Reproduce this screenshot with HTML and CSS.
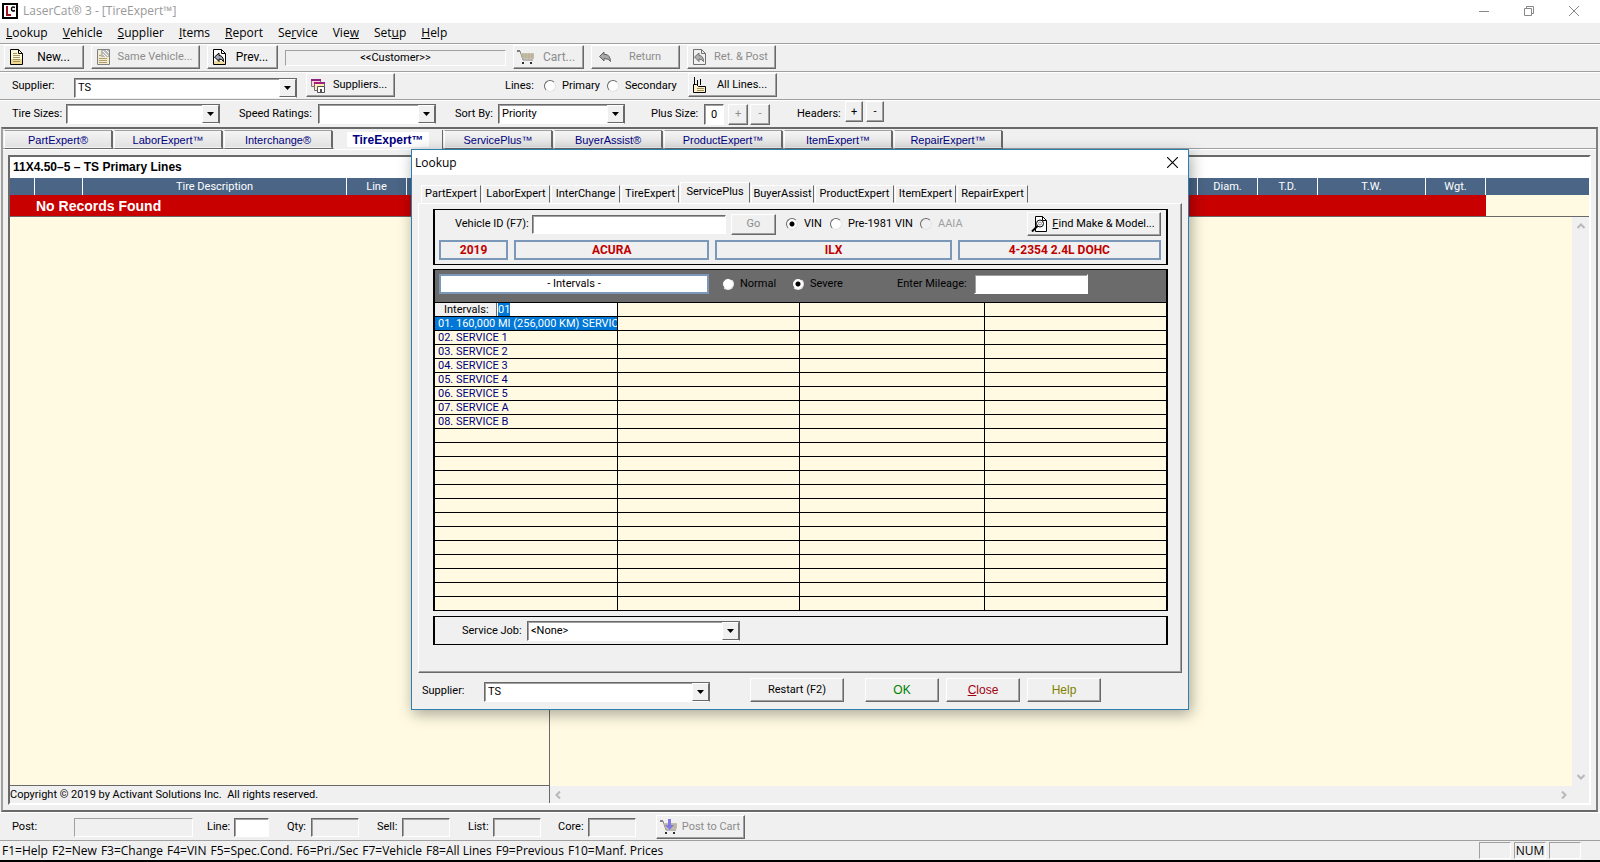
FILE: index.html
```html
<!DOCTYPE html>
<html lang="en">
<head>
<meta charset="utf-8">
<title>LaserCat 3</title>
<link rel="stylesheet" href="styles.css">
</head>
<body>
<svg class="defs" width="0" height="0" aria-hidden="true">
  <symbol id="arrow" viewBox="0 0 7 4"><path d="M0 0h7L3.500 4z" fill="#000"/></symbol>
  <symbol id="cart" viewBox="0 0 18 16">
    <path d="M1 2h2l3 9h10" fill="none" stroke="#808080"/><path d="M0 1h3v2H0z" fill="#808080"/>
    <path d="M4 4h13v6H6z" fill="#d0c8b4"/><path d="M6 4v7M9 4v7M12 4v7M15 4v7M4 6h13M5 8h12" stroke="#b8ae98"/>
    <path d="M5 13h2v2H5zM13 13h2v2h-2z" fill="#303030"/>
  </symbol>
  <symbol id="back" viewBox="0 0 12 10"><path d="M5 0v2.500h2q4 .5 4.500 7Q10 6.500 5 6.500V9L.5 4.500z" fill="#a8a8a8" stroke="#606060"/></symbol>
</svg>

<header class="titlebar">
  <svg class="logo" viewBox="0 0 16 16"><path d="M1 1h14v14H1z" fill="#fff" stroke="#000" stroke-width="2"/><path d="M5 3v9M4 12h5" fill="none" stroke="#a01020" stroke-width="2"/><path d="M13 4.500q-3.500-1.500-3.500 1.500t3.500 1.500" fill="none" stroke="#000" stroke-width="1.500"/></svg>
  <h1>LaserCat® 3 - [TireExpert™]</h1>
  <div class="wincontrols">
    <button aria-label="Minimize"><svg viewBox="0 0 10 10"><path d="M0 5.500h10" stroke="#888"/></svg></button>
    <button aria-label="Restore"><svg viewBox="0 0 10 10"><path d="M.5 2.500h7v7h-7zM2.500 2.500v-2h7v7h-2" fill="none" stroke="#888"/></svg></button>
    <button aria-label="Close"><svg viewBox="0 0 10 10"><path d="M0 0l10 10M10 0L0 10" stroke="#888"/></svg></button>
  </div>
</header>

<nav class="menubar">
  <button><u>L</u>ookup</button><button><u>V</u>ehicle</button><button><u>S</u>upplier</button><button><u>I</u>tems</button><button><u>R</u>eport</button><button>Se<u>r</u>vice</button><button>Vie<u>w</u></button><button>Set<u>u</u>p</button><button><u>H</u>elp</button>
</nav>

<div class="toolbar main-tools">
  <button class="btn b-new"><svg class="ico" viewBox="0 0 16 16"><path d="M2.500.5h8l4 4v11h-12z" fill="#fff8d8" stroke="#000"/><path d="M3 10h11v5H3z" fill="#f0d890"/><path d="M10.500.5v4h4" fill="none" stroke="#000"/><path d="M5 4.500h4M5 6.500h7M5 8.500h7M5 10.500h7M5 12.500h7" stroke="#a89868"/></svg><span>New...</span></button>
  <button class="btn b-same" disabled><svg class="ico" viewBox="0 0 16 16"><path d="M2.500.5h12v15h-12z" fill="#f4ecd0" stroke="#808080"/><path d="M6 1h8v7H6z" fill="#b8b8b8"/><path d="M8 2l5 5M8 5l3 3M11 1l3 3" stroke="#fff"/><path d="M4 6.500h2M4 9.500h8M4 11.500h8M4 13.500h8" stroke="#b0a070"/></svg><span>Same Vehicle...</span></button>
  <button class="btn b-prev"><svg class="ico" viewBox="0 0 16 16"><path d="M2.500.5h8l4 4v11h-12z" fill="#fff" stroke="#000"/><path d="M10.500.5v4h4" fill="none" stroke="#000"/><path d="M3 12h11v3H3z" fill="#f0dca0"/><path d="M8 4v2.500q4.500 0 4.500 6Q11 10 8 10v2.500L3.500 8z" fill="#a0a8b8" stroke="#000"/></svg><span>Prev...</span></button>
  <output class="customer">&lt;&lt;Customer&gt;&gt;</output>
  <button class="btn b-cart" disabled><svg class="ico wide"><use href="#cart"/></svg><span>Cart...</span></button>
  <button class="btn b-ret" disabled><svg class="ico small"><use href="#back"/></svg><span>Return</span></button>
  <button class="btn b-ret" disabled><svg class="ico" viewBox="0 0 16 16"><path d="M2.500.5h8l4 4v11h-12z" fill="#f0f0f0" stroke="#707070"/><path d="M10.500.5v4h4" fill="none" stroke="#707070"/><path d="M8 4v2.500q4.500 0 4.500 6Q11 10 8 10v2.500L3.500 8z" fill="#b0b0b0" stroke="#707070"/></svg><span>Ret. &amp; Post</span></button>
</div>

<div class="toolbar supplier-tools">
  <label for="supplier">Supplier:</label>
  <span class="combo"><select id="supplier"><option>TS</option></select><span class="drop"><svg><use href="#arrow"/></svg></span></span>
  <button class="btn b-suppliers"><svg class="ico" viewBox="0 0 16 16"><path d="M1.500 2.500h9v7h-9z" fill="#ffd0d8" stroke="#807080"/><path d="M1 2h10v2H1z" fill="#902080"/><path d="M4.500 5.500h10v8h-10z" fill="#fff0b0" stroke="#706880"/><path d="M4 5h11v2H4z" fill="#a02080"/><path d="M7.500 9.500h7v6h-7z" fill="#fff" stroke="#505050"/><path d="M10 12h2v3h-2z" fill="#505050"/></svg><span>Suppliers...</span></button>
  <span class="lines-label">Lines:</span>
  <label class="radio"><input type="radio" name="lines"><span>Primary</span></label>
  <label class="radio"><input type="radio" name="lines"><span>Secondary</span></label>
  <button class="btn b-ret"><svg class="ico" viewBox="0 0 16 16"><path d="M2.500 0v8M5.500 3v5M8.500 2v6" stroke="#000"/><path d="M1.500 7.500h3l2 2h7v6h-12z" fill="#fff0c8" stroke="#000"/><path d="M5 11.500h7M5 13.500h7" stroke="#a09060"/></svg><span>All Lines...</span></button>
</div>

<div class="toolbar tire-tools">
  <label for="sizes">Tire Sizes:</label>
  <span class="combo"><select id="sizes"><option></option></select><span class="drop"><svg><use href="#arrow"/></svg></span></span>
  <label for="speed">Speed Ratings:</label>
  <span class="combo"><select id="speed"><option></option></select><span class="drop"><svg><use href="#arrow"/></svg></span></span>
  <label for="sort">Sort By:</label>
  <span class="combo"><select id="sort"><option>Priority</option></select><span class="drop"><svg><use href="#arrow"/></svg></span></span>
  <label for="plus">Plus Size:</label>
  <input class="field plus" id="plus" type="text" value="0">
  <button class="btn step" disabled>+</button>
  <button class="btn step" disabled>-</button>
  <span>Headers:</span>
  <button class="btn step raised">+</button>
  <button class="btn step raised">-</button>
</div>

<main class="workspace">
  <div class="tabs" role="tablist">
    <button role="tab">PartExpert®</button><button role="tab">LaborExpert™</button><button role="tab">Interchange®</button><button role="tab" aria-selected="true" class="on"><span>TireExpert™</span></button><button role="tab">ServicePlus™</button><button role="tab">BuyerAssist®</button><button role="tab" class="wider">ProductExpert™</button><button role="tab">ItemExpert™</button><button role="tab">RepairExpert™</button>
  </div>
  <div class="sheet">
    <section class="results">
      <h2>11X4.50–5 – TS Primary Lines</h2>
      <table class="tires">
        <colgroup><col class="c1"><col class="c2"><col class="c3"><col class="c4"><col class="c5"><col class="c4"><col class="c4"><col class="c6"><col class="c4"><col></colgroup>
        <thead><tr><th></th><th></th><th>Tire Description</th><th>Line</th><th></th><th>Diam.</th><th>T.D.</th><th>T.W.</th><th>Wgt.</th><th></th></tr></thead>
        <tbody><tr><td colspan="9" class="none">No Records Found</td><td></td></tr></tbody>
      </table>
      <div class="panes">
        <div class="left"><div class="blank"></div><p>Copyright © 2019 by Activant Solutions Inc.&nbsp; All rights reserved.</p></div>
        <div class="right">
          <div class="blank"></div>
          <div class="vscroll"><svg viewBox="0 0 8 6"><path d="M.5 5L4 1.500 7.500 5" fill="none" stroke="#b8b8b8" stroke-width="2"/></svg><svg viewBox="0 0 8 6"><path d="M.5 1L4 4.500 7.500 1" fill="none" stroke="#b8b8b8" stroke-width="2"/></svg></div>
          <div class="hscroll"><svg viewBox="0 0 6 8"><path d="M5 .5L1.500 4 5 7.500" fill="none" stroke="#b8b8b8" stroke-width="2"/></svg><svg viewBox="0 0 6 8"><path d="M1 .5L4.500 4 1 7.500" fill="none" stroke="#b8b8b8" stroke-width="2"/></svg></div>
        </div>
      </div>
    </section>
  </div>
</main>

<div class="toolbar post-tools">
  <label for="post">Post:</label><input class="field thin" id="post" disabled>
  <label for="line">Line:</label><input class="field" id="line">
  <label for="qty">Qty:</label><input class="field" id="qty" disabled>
  <label for="sell">Sell:</label><input class="field" id="sell" disabled>
  <label for="list">List:</label><input class="field" id="list" disabled>
  <label for="core">Core:</label><input class="field" id="core" disabled>
  <button class="btn b-ret" disabled><svg class="ico wide" viewBox="0 0 18 16"><use href="#cart"/><path d="M8 0h3v6h3l-4.500 5L5 6h3z" fill="#8078e8"/></svg><span>Post to Cart</span></button>
</div>

<footer class="statusbar">
  <div class="keys"><span>F1=Help</span><span>F2=New</span><span>F3=Change</span><span>F4=VIN</span><span>F5=Spec.Cond.</span><span>F6=Pri./Sec</span><span>F7=Vehicle</span><span>F8=All Lines</span><span>F9=Previous</span><span>F10=Manf. Prices</span></div>
  <span class="ind"></span><span class="ind">NUM</span><span class="ind"></span>
</footer>

<div class="dialog" role="dialog" aria-labelledby="dlg-title">
  <div class="dlg-title"><h2 id="dlg-title">Lookup</h2><button aria-label="Close"><svg viewBox="0 0 10 10"><path d="M0 0l10 10M10 0L0 10" stroke="#000"/></svg></button></div>
  <div class="dlg-tabs" role="tablist">
    <button role="tab" class="t1">PartExpert</button><button role="tab" class="t2">LaborExpert</button><button role="tab" class="t3">InterChange</button><button role="tab" class="t4">TireExpert</button><button role="tab" aria-selected="true" class="t5 on">ServicePlus</button><button role="tab" class="t6">BuyerAssist</button><button role="tab" class="t7">ProductExpert</button><button role="tab" class="t8">ItemExpert</button><button role="tab" class="t9">RepairExpert</button>
  </div>
  <div class="page">
    <section class="group vehicle">
      <div class="vin-row">
        <label for="vid">Vehicle ID (F7):</label><input class="field" id="vid" type="text">
        <button class="btn go" disabled>Go</button>
        <label class="radio"><input type="radio" name="id" checked><span>VIN</span></label>
        <label class="radio"><input type="radio" name="id"><span>Pre-1981 VIN</span></label>
        <label class="radio off"><input type="radio" name="id" disabled><span>AAIA</span></label>
        <button class="btn find"><svg class="ico" viewBox="0 0 16 16"><path d="M4.500.5h7l4 4v11h-11z" fill="#fff" stroke="#000"/><path d="M11.500.5v4h4" fill="none" stroke="#000"/><circle cx="9" cy="7.500" r="3.500" fill="#fff" stroke="#000"/><circle cx="9" cy="7.500" r="1.500" fill="none" stroke="#909090"/><path d="M6.500 10L1 15.500" stroke="#000" stroke-width="2"/></svg><span><u>F</u>ind Make &amp; Model...</span></button>
      </div>
      <div class="car"><output>2019</output><output>ACURA</output><output>ILX</output><output>4-2354 2.4L DOHC</output></div>
    </section>
    <section class="group schedule">
      <div class="sched-bar">
        <output>- Intervals -</output>
        <label class="radio"><input type="radio" name="duty"><span>Normal</span></label>
        <label class="radio"><input type="radio" name="duty" checked><span>Severe</span></label>
        <label for="miles" class="miles-label">Enter Mileage:</label><input class="field" id="miles" type="text">
      </div>
      <table class="intervals">
        <colgroup><col class="i1"><col class="i2"><col class="i3"><col></colgroup>
        <tbody>
        <tr><td class="entry"><div><label for="ival">Intervals:</label><input id="ival" type="text" value="01"></div></td><td></td><td></td><td></td></tr>
        <tr><td class="sel">01. 160,000 MI (256,000 KM) SERVIC</td><td></td><td></td><td></td></tr>
        <tr><td>02. SERVICE 1</td><td></td><td></td><td></td></tr>
        <tr><td>03. SERVICE 2</td><td></td><td></td><td></td></tr>
        <tr><td>04. SERVICE 3</td><td></td><td></td><td></td></tr>
        <tr><td>05. SERVICE 4</td><td></td><td></td><td></td></tr>
        <tr><td>06. SERVICE 5</td><td></td><td></td><td></td></tr>
        <tr><td>07. SERVICE A</td><td></td><td></td><td></td></tr>
        <tr><td>08. SERVICE B</td><td></td><td></td><td></td></tr>
        <tr><td></td><td></td><td></td><td></td></tr>
        <tr><td></td><td></td><td></td><td></td></tr>
        <tr><td></td><td></td><td></td><td></td></tr>
        <tr><td></td><td></td><td></td><td></td></tr>
        <tr><td></td><td></td><td></td><td></td></tr>
        <tr><td></td><td></td><td></td><td></td></tr>
        <tr><td></td><td></td><td></td><td></td></tr>
        <tr><td></td><td></td><td></td><td></td></tr>
        <tr><td></td><td></td><td></td><td></td></tr>
        <tr><td></td><td></td><td></td><td></td></tr>
        <tr><td></td><td></td><td></td><td></td></tr>
        <tr><td></td><td></td><td></td><td></td></tr>
        <tr><td></td><td></td><td></td><td></td></tr>
        </tbody>
      </table>
    </section>
    <section class="group job">
      <label for="job">Service Job:</label>
      <span class="combo"><select id="job"><option>&lt;None&gt;</option></select><span class="drop"><svg><use href="#arrow"/></svg></span></span>
    </section>
  </div>
  <div class="dlg-foot">
    <label for="dsup">Supplier:</label>
    <span class="combo"><select id="dsup"><option>TS</option></select><span class="drop"><svg><use href="#arrow"/></svg></span></span>
    <button class="btn restart">Restart (F2)</button>
    <button class="btn ok">OK</button><button class="btn close"><u>C</u>lose</button><button class="btn help">Help</button>
  </div>
</div>
<script src="app.js"></script>
</body>
</html>
```
FILE: app.js
```js
const interval = document.getElementById("ival");
interval.focus();
interval.select();
```
FILE: styles.css
```css
* { box-sizing: border-box; }
:root {
  --face: #f0f0f0;
  --shade: #a0a0a0;
  --dark: #696969;
  --cream: #fffae1;
  --ui: Roboto, "Liberation Sans", sans-serif;
  --menu: "Open Sans", "Noto Sans", sans-serif;
}
body {
  margin: 0; min-height: 100vh; display: flex; flex-direction: column;
  background: var(--face); color: #000; font: 11px/14px var(--ui);
  white-space: nowrap; border-bottom: 2px solid #000; overflow: hidden;
}
button, input, select, output { font: inherit; color: inherit; }
button { padding: 0; background: none; border: 0; }
h1, h2, p { margin: 0; font: inherit; }
.defs { position: absolute; }

.titlebar { display: flex; align-items: center; height: 23px; padding: 0 4px 1px 2px; background: #fff; color: #999; font: 12px/16px var(--menu); }
.logo { width: 16px; height: 16px; margin-right: 5px; }
.wincontrols { display: flex; margin-left: auto; }
.wincontrols button { width: 45px; height: 20px; display: grid; place-items: center; }
.wincontrols svg { width: 10px; height: 10px; }

.menubar { display: flex; gap: 15px; height: 20px; padding-left: 6px; font: 12px/20px var(--menu); }
.toolbar { display: flex; align-items: center; height: 28px; border-top: 1px solid var(--shade); box-shadow: inset 0 1px #fff; }

.btn {
  display: flex; align-items: center; justify-content: center; height: 24px; flex: none;
  background: var(--face); border: 1px solid; border-color: #fff var(--dark) var(--dark) #fff;
  box-shadow: inset -1px -1px var(--shade);
}
.btn:disabled { color: #8c8c8c; }
.btn > span { flex: 1; text-align: center; }
.ico { width: 16px; height: 16px; margin-left: 3px; flex: none; }
.ico.wide { width: 18px; }
.ico.small { width: 12px; height: 10px; margin: 0 0 0 7px; }
.b-new { width: 80px; } .b-same { width: 109px; } .b-prev { width: 71px; } .b-cart { width: 71px; }
.b-ret, .b-suppliers { width: 89px; }
.main-tools { gap: 7px; padding: 0 0 1px 4px; }
.main-tools .btn { font-size: 12px; }
.main-tools .b-same, .main-tools .b-ret { font-size: 11px; }
.customer { width: 221px; height: 16px; margin-top: 2px; text-align: center; border: 1px solid; border-color: var(--shade) #fff #fff var(--shade); }

.combo { display: grid; height: 20px; border: 1px solid; border-color: var(--dark); box-shadow: inset 1px 1px var(--shade); background: #fff; flex: none; border-bottom-color: #fff; }
.combo select { grid-area: 1/1; appearance: none; border: 0; background: none; padding: 0 0 0 3px; width: 100%; height: 18px; outline: 0; }
.drop { grid-area: 1/1; justify-self: end; width: 17px; height: 18px; display: grid; place-items: center; background: var(--face); border: 1px solid; border-color: #fff var(--dark) var(--dark) #fff; pointer-events: none; }
.drop svg { width: 7px; height: 4px; }
.field { height: 19px; min-width: 0; padding: 0 2px; background: #fff; border: 1px solid; border-color: var(--dark) #fff #fff var(--dark); box-shadow: inset 1px 1px var(--shade); border-radius: 0; outline: 0; flex: none; }
.field:disabled { background: var(--face); }
.field.thin { box-shadow: none; border-color: var(--shade) #fff #fff var(--shade); }

.radio { display: flex; align-items: center; gap: 6px; flex: none; }
.radio input { appearance: none; margin: 0; width: 12px; height: 12px; border-radius: 50%; background: #fff; border: 1px solid; border-color: var(--dark) #e3e3e3 #e3e3e3 var(--dark); flex: none; }
.radio input:checked { background: radial-gradient(circle, #000 2px, #fff 3px); }
.radio.off { color: #a0a0a0; }
.radio.off input { background: var(--face); }

.supplier-tools { padding-left: 12px; }
.supplier-tools > label:first-child { width: 62px; }
.supplier-tools .combo { width: 223px; margin: 4px 9px 0 0; }
.supplier-tools .btn { align-self: flex-start; margin-top: 1px; }
.lines-label { width: 39px; margin-left: 110px; }
.supplier-tools .radio { width: 63px; }
.supplier-tools .radio + .radio { width: 81px; }

.tire-tools { padding: 1px 0 0 12px; }
.tire-tools label { flex: none; }
.tire-tools .combo { width: 154px; }
.tire-tools label:nth-of-type(1) { width: 54px; }
.tire-tools label:nth-of-type(2) { width: 79px; margin-left: 19px; }
.tire-tools label:nth-of-type(3) { width: 43px; margin-left: 19px; }
.tire-tools label:nth-of-type(4) { width: 53px; margin-left: 26px; }
.tire-tools #plus { width: 20px; height: 21px; text-align: center; margin-right: 4px; }
.tire-tools .combo:has(#speed) { width: 118px; }
.tire-tools .combo:has(#sort) { width: 127px; }
.step { width: 20px; height: 21px; margin-right: 2px; }
.tire-tools > span:not(.combo) { width: 48px; margin-left: 25px; }
.step.raised { width: 18px; margin-right: 3px; align-self: flex-start; }

.workspace { flex: 1; display: flex; flex-direction: column; margin: 0 2px 0 1px; border: 2px solid; border-color: var(--dark) #808080 var(--dark) var(--shade); }
.tabs { display: flex; padding: 1px 0 0 1px; height: 20px; border-bottom: 1px solid var(--shade); font: 11px/18px "Liberation Sans", sans-serif; color: #000080; }
.tabs button { width: 108px; margin-right: 2px; height: 18px; border: 1px solid; border-color: var(--shade) var(--dark) transparent #fff; box-shadow: 1px 1px var(--dark); background: linear-gradient(#f4f4f4, #e2e2e2); flex: none; }
.tabs .wider { width: 118px; }
.tabs .on { font-size: 12px; font-weight: bold; background: var(--face); border-color: transparent; height: 19px; box-shadow: 1px 0 var(--dark); }
.tabs .on span { background: #fff; padding: 0 5px; display: inline-block; height: 15px; line-height: 16px; }
.sheet { flex: 1; display: flex; padding: 5px 5px 5px 5px; border-top: 1px solid #fff; }
.results { flex: 1; display: flex; flex-direction: column; border: 2px solid; border-color: var(--dark) #fff #fff var(--dark); }
.results h2 { height: 21px; padding-left: 3px; background: #fff; font: bold 12px/20px "Liberation Sans", sans-serif; }
.tires { width: 100%; table-layout: fixed; border-spacing: 0; }
.tires th { height: 17px; padding: 0; background: #4a6585; color: #fff; font-weight: normal; border-right: 1px solid #fff; line-height: 15px; }
.tires th:last-child { border: 0; }
.tires td { height: 22px; padding: 0; background: var(--cream); border-bottom: 1px solid var(--dark); }
.tires .none { background: #c80000; color: #fff; font: bold 14px/20px "Liberation Sans", sans-serif; padding-left: 26px; }
.c1 { width: 25px; } .c2 { width: 48px; } .c3 { width: 264px; } .c4 { width: 60px; } .c5 { width: 791px; } .c6 { width: 108px; }
.panes { flex: 1; display: flex; }
.left { width: 540px; display: flex; flex-direction: column; border-right: 1px solid var(--dark); flex: none; }
.blank { background: var(--cream); }
.left .blank { flex: 1; border-bottom: 1px solid var(--dark); }
.left p { height: 17px; line-height: 17px; }
.right { flex: 1; display: grid; grid-template: 1fr 17px / 1fr 17px; }
.vscroll, .hscroll { display: flex; justify-content: space-between; align-items: center; }
.vscroll { flex-direction: column; padding: 6px 0; }
.hscroll { padding: 0 5px; }
.vscroll svg { width: 8px; height: 6px; }
.hscroll svg { width: 6px; height: 8px; }

.post-tools { padding: 2px 0 0 12px; border-top: 0; }
.post-tools label { flex: none; margin-left: 18px; }
.post-tools label:nth-of-type(1) { width: 62px; margin: 0; }
.post-tools label:nth-of-type(2) { width: 27px; margin-left: 14px; }
.post-tools label:nth-of-type(3) { width: 24px; }
.post-tools label:nth-of-type(4) { width: 25px; }
.post-tools label:nth-of-type(5) { width: 25px; }
.post-tools label:nth-of-type(6) { width: 30px; margin-left: 17px; }
.post-tools .field { width: 48px; }
.post-tools #post { width: 119px; }
.post-tools #line { width: 35px; }
.post-tools .btn { margin-left: 20px; }
.statusbar { display: flex; align-items: center; gap: 3px; height: 20px; padding: 0 19px 0 2px; border-top: 1px solid var(--shade); font: 12px/16px var(--menu); }
.keys { flex: 1; display: flex; gap: 4px; }
.ind { width: 32px; height: 17px; border: 1px solid; border-color: var(--shade) #fff #fff var(--shade); text-align: center; line-height: 16px; }

.dialog { position: absolute; left: 411px; top: 149px; width: 778px; background: var(--face); border: 1px solid #2a80b0; box-shadow: 2px 4px 14px rgba(0, 0, 0, .35); }
.dlg-title { display: flex; justify-content: space-between; align-items: center; height: 25px; padding: 0 10px 0 3px; background: #fff; font: 12px/20px var(--menu); }
.dlg-title button { display: grid; }
.dlg-title svg { width: 11px; height: 11px; }
.dlg-tabs { display: flex; align-items: flex-end; height: 28px; padding-left: 9px; }
.dlg-tabs button { height: 18px; border: 1px solid; border-color: #fff var(--dark) transparent #fff; flex: none; margin-right: 1px; }
.dlg-tabs .on { height: 21px; padding-bottom: 2px; }
.t1 { width: 60px; } .t2 { width: 68px; } .t3 { width: 69px; } .t4 { width: 58px; } .t5 { width: 70px; } .t6 { width: 63px; } .t7 { width: 79px; } .t8 { width: 61px; } .t9 { width: 71px; }
.page { margin: 0 6px 0 6px; padding: 5px 13px 27px 14px; border: 1px solid; border-color: #fff var(--dark) var(--dark) #fff; box-shadow: inset -1px -1px var(--shade); }
.group { border: solid #000; border-width: 1px 2px; }
.vehicle { height: 56px; padding: 2px 5px 3px 4px; margin-bottom: 4px; }
.vin-row { display: flex; align-items: center; height: 24px; margin-bottom: 4px; padding-left: 16px; }
.vin-row > label:first-child { width: 77px; }
.vin-row .field { width: 194px; margin-right: 5px; }
.go { width: 45px; height: 21px; margin-right: 10px; }
.vin-row .radio:nth-of-type(2) { width: 44px; }
.vin-row .radio:nth-of-type(3) { width: 90px; }
.find { width: 134px; margin-left: auto; }
.car { display: grid; grid-template-columns: 69fr 195fr 236fr 203fr; gap: 6px; }
.car output, .sched-bar output { height: 20px; border: 2px solid #7c98b8; text-align: center; }
.car output { font: bold 12px/16px var(--ui); color: #c00000; }
.sched-bar { display: flex; align-items: center; height: 33px; padding: 0 0 4px 4px; background: #6b6b6b; border-bottom: 1px solid #000; }
.sched-bar output { width: 270px; background: #fff; line-height: 16px; margin-right: 13px; }
.sched-bar .radio { width: 70px; }
.miles-label { margin-left: 35px; width: 77px; }
.sched-bar .field { width: 114px; height: 20px; }
.intervals { width: 100%; table-layout: fixed; border-spacing: 0; background: var(--cream); color: #000080; }
.intervals td { height: 14px; padding: 0 0 0 3px; border: solid #000; border-width: 0 1px 1px 0; line-height: 13px; overflow: hidden; }
.intervals td:last-child { border-right: 0; }
.intervals tr:last-child td { height: 13px; border-bottom: 0; }
.intervals .sel { background: #0078d7; color: #fff; }
.intervals .entry { padding: 0; color: #000; }
.entry div { display: flex; height: 13px; }
.entry label { width: 62px; padding-left: 9px; background: var(--face); border-right: 1px solid var(--dark); }
.entry input { flex: 1; min-width: 0; height: 13px; padding: 0 0 0 1px; border: 0; outline: 0; background: #fff; caret-color: transparent; }
.entry input::selection { background: #0078d7; color: #fff; }
.i1 { width: 183px; } .i2 { width: 182px; } .i3 { width: 185px; }
.schedule { margin-bottom: 5px; }
.job { display: flex; align-items: center; height: 29px; padding-left: 27px; }
.job label { width: 65px; }
.job .combo { width: 213px; }
.dlg-foot { display: flex; align-items: center; padding: 5px 0 7px 10px; }
.dlg-foot label { width: 62px; margin-top: 2px; }
.dlg-foot .combo { width: 226px; margin: 3px 40px 0 0; }
.dlg-foot .btn { width: 74px; margin-right: 7px; }
.dlg-foot .restart { width: 94px; margin-right: 21px; }
.dlg-foot .ok, .dlg-foot .close, .dlg-foot .help { font: 12px/14px "Liberation Sans", sans-serif; }
.dlg-foot .ok { color: #008000; } .dlg-foot .close { color: #a00010; } .dlg-foot .help { color: #808000; }
```
